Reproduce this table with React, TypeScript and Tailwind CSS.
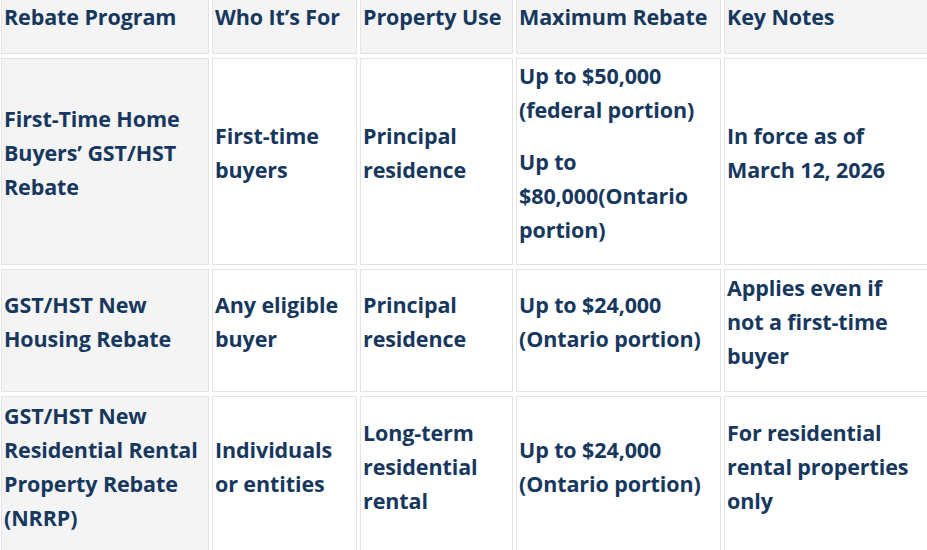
const rows: { cells: string[][][] }[] = [
  {
    cells: [
      [["First-Time Home", "Buyers’ GST/HST", "Rebate"]],
      [["First-time", "buyers"]],
      [["Principal", "residence"]],
      [["Up to $50,000", "(federal portion)"], ["Up to", "$80,000(Ontario", "portion)"]],
      [["In force as of", "March 12, 2026"]],
    ],
  },
  {
    cells: [
      [["GST/HST New", "Housing Rebate"]],
      [["Any eligible", "buyer"]],
      [["Principal", "residence"]],
      [["Up to $24,000", "(Ontario portion)"]],
      [["Applies even if", "not a first-time", "buyer"]],
    ],
  },
  {
    cells: [
      [["GST/HST New", "Residential Rental", "Property Rebate", "(NRRP)"]],
      [["Individuals", "or entities"]],
      [["Long-term", "residential", "rental"]],
      [["Up to $24,000", "(Ontario portion)"]],
      [["For residential", "rental properties", "only"]],
    ],
  },
]

const headers = ["Rebate Program", "Who It’s For", "Property Use", "Maximum Rebate", "Key Notes"]

function Cell({ paras, grey }: { paras: string[][]; grey?: boolean }) {
  return (
    <div
      className={`flex flex-col justify-center border border-[#e3e3e3] pl-[2px] overflow-hidden ${
        grey ? "bg-[#f4f4f4]" : "bg-white"
      }`}
    >
      {paras.map((lines, i) => (
        <p key={i} className="mb-[18px] whitespace-nowrap">
          {lines.map((l, j) => (
            <span key={j} className="block">
              {l}
            </span>
          ))}
        </p>
      ))}
    </div>
  )
}

export default function App() {
  return (
    <main className="w-[927px] h-[550px] overflow-hidden bg-white">
      <div
        className="grid grid-cols-[208px_145px_153px_205px_230px] grid-rows-[55px_207px_123px_160px] gap-x-[3px] gap-y-[4px] pl-[1px] mt-[-1px] text-[#17385e] font-bold text-[21.5px] leading-[34px] tracking-[-0.1px]"
        style={{ fontFamily: '"Open Sans", "Noto Sans", sans-serif' }}
      >
        {/* Header row */}
        {headers.map((h) => (
          <div key={h} className="border border-[#e3e3e3] bg-[#f4f4f4] pl-[2px] whitespace-nowrap overflow-hidden">
            {h}
          </div>
        ))}

        {/* Body rows */}
        {rows.map((r, i) =>
          r.cells.map((paras, j) => <Cell key={`${i}-${j}`} paras={paras} grey={j === 0} />)
        )}
      </div>
    </main>
  )
}
